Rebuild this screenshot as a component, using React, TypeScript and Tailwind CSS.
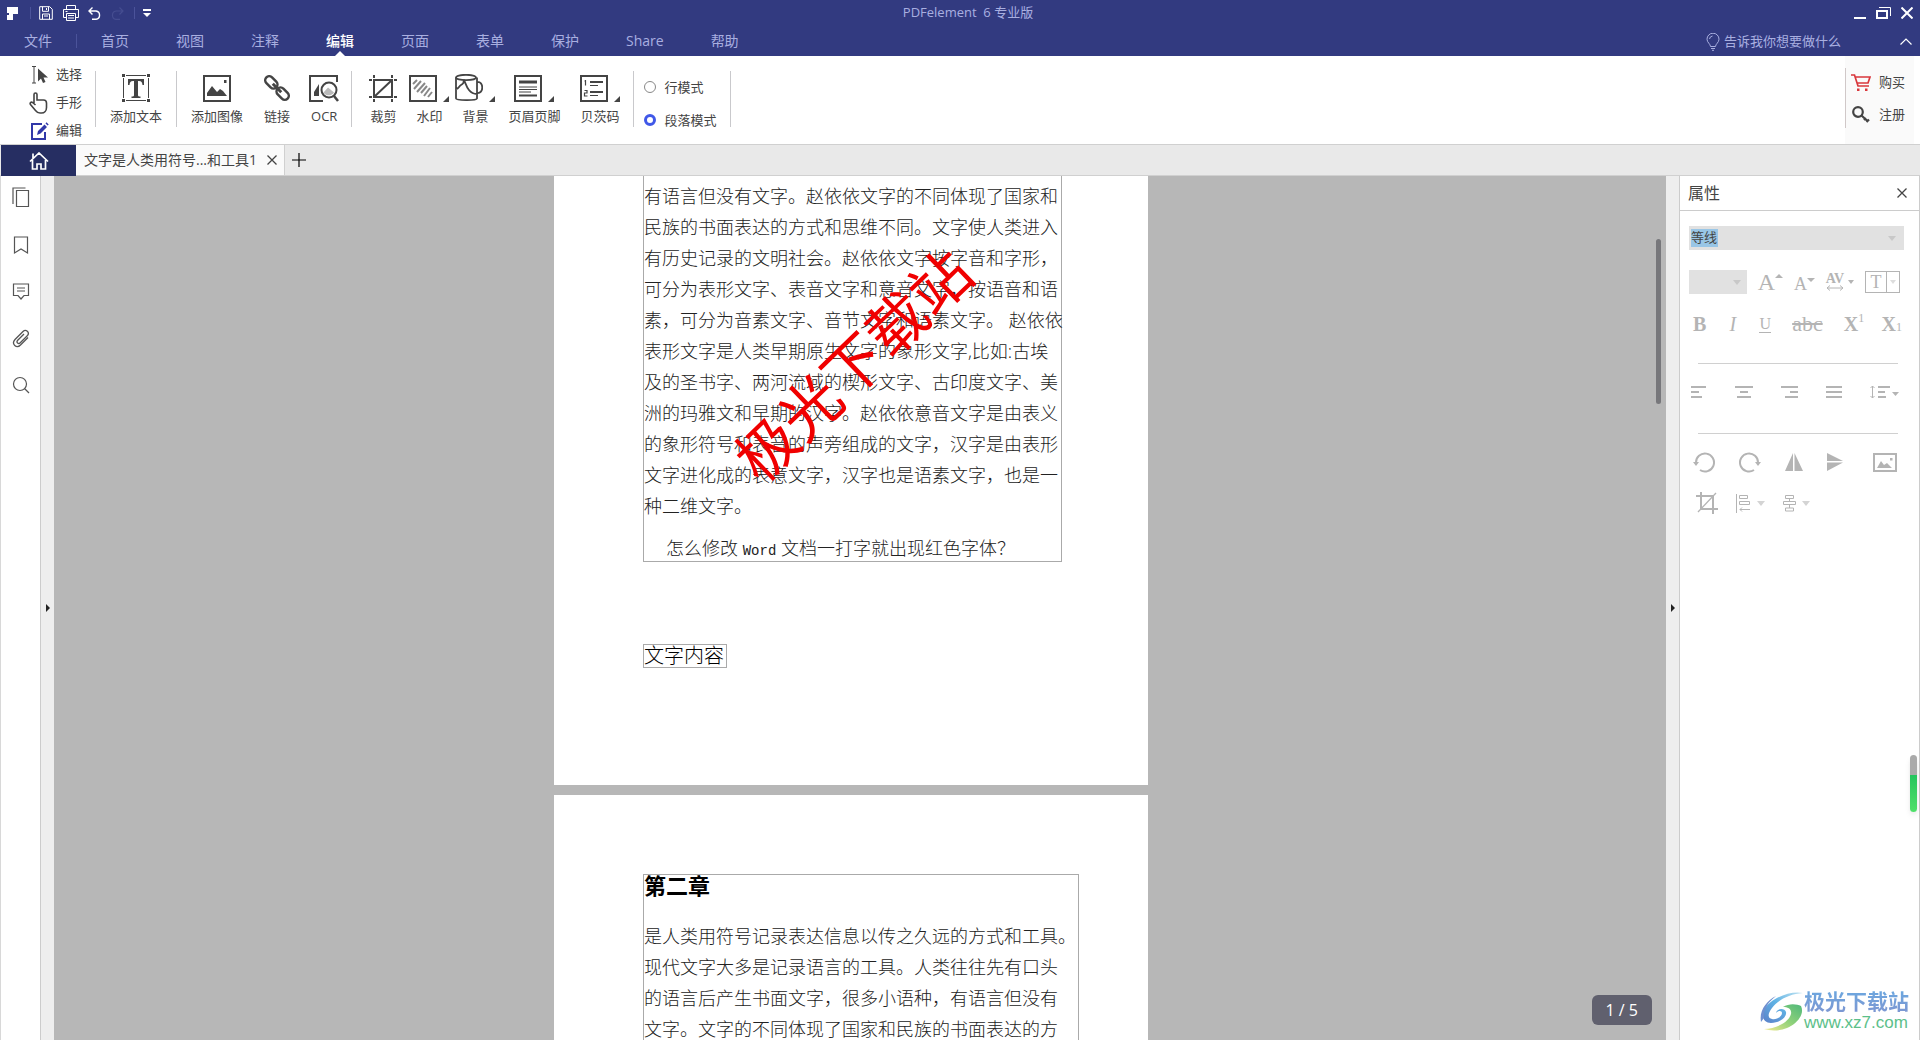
import { FC, ReactNode, useState } from 'react';

const MENU = ['首页', '视图', '注释', '编辑', '页面', '表单', '保护', 'Share', '帮助'];

const PAGE_ONE = [
  '有语言但没有文字。赵依依文字的不同体现了国家和',
  '民族的书面表达的方式和思维不同。文字使人类进入',
  '有历史记录的文明社会。赵依依文字按字音和字形，',
  '可分为表形文字、表音文字和意音文字，按语音和语',
  '素，可分为音素文字、音节文字和语素文字。 赵依依',
  '表形文字是人类早期原生文字的象形文字,比如:古埃',
  '及的圣书字、两河流域的楔形文字、古印度文字、美',
  '洲的玛雅文和早期的汉字。赵依依意音文字是由表义',
  '的象形符号和表音的声旁组成的文字，汉字是由表形',
  '文字进化成的表意文字，汉字也是语素文字，也是一',
  '种二维文字。',
];

const PAGE_TWO = [
  '是人类用符号记录表达信息以传之久远的方式和工具。',
  '现代文字大多是记录语言的工具。人类往往先有口头',
  '的语言后产生书面文字，很多小语种，有语言但没有',
  '文字。文字的不同体现了国家和民族的书面表达的方',
];

interface IconProps {
  w: number;
  h: number;
  sw?: number;
  children: ReactNode;
}

const Icon: FC<IconProps> = ({ w, h, sw = 1, children }) => (
  <svg
    width={w}
    height={h}
    viewBox={`0 0 ${w} ${h}`}
    fill="none"
    stroke="currentColor"
    strokeWidth={sw}
    className="shrink-0"
    aria-hidden
  >
    {children}
  </svg>
);

const Caret: FC = () => (
  <Icon w={8} h={5}>
    <path d="M0 0h8L4 5z" fill="currentColor" stroke="none" />
  </Icon>
);

const Cross: FC<{ size: number; sw?: number }> = ({ size, sw = 1.3 }) => (
  <Icon w={size} h={size} sw={sw}>
    <path d={`M.5.5 ${size - 0.5} ${size - 0.5}M${size - 0.5}.5.5 ${size - 0.5}`} />
  </Icon>
);

const Divider: FC = () => <div className="mx-[14px] h-14 w-px shrink-0 bg-[#c9c9cc]" />;

const Tool: FC<{ label: string; menu?: boolean; children: ReactNode }> = ({
  label,
  menu,
  children,
}) => (
  <button type="button" className="flex flex-col items-center gap-1 text-[#444]">
    <span className="-mx-2 flex h-[30px] items-end gap-[6px]">
      {children}
      {menu && (
        <Icon w={6} h={6}>
          <path d="M6 0v6H0z" fill="currentColor" stroke="none" />
        </Icon>
      )}
    </span>
    <span className="text-[13px] leading-5">{label}</span>
  </button>
);

const TitleBar: FC = () => (
  <div className="flex h-[26px] items-center justify-between px-[7px] text-white">
    <div className="flex flex-1 items-center">
      <Icon w={11} h={13}>
        <path d="M0 0h11v7H6v6H0V8h2V6H0z" fill="currentColor" stroke="none" />
      </Icon>
      <span className="ml-3 h-3 w-px bg-[#4b539a]" />
      <button type="button" aria-label="保存" className="ml-2">
        <Icon w={14} h={14}>
          <path d="M.7.7h10l2.6 2.6v10H.7zM3.5.7v4.6h6V.7M7.5 2v2M3.5 13.300V8h7v5.300M5 10h4" />
        </Icon>
      </button>
      <button type="button" aria-label="打印" className="ml-[10px]">
        <Icon w={16} h={16}>
          <path d="M3.500 4.500v-4h9v4M3.500 12.500h-3v-8h15v8h-3M3.500 8.500h9v7h-9zM5 10.500h6M5 13h6M2.500 6.500h2" />
        </Icon>
      </button>
      <button type="button" aria-label="撤销" className="ml-[9px]">
        <Icon w={13} h={13} sw={1.4}>
          <path d="M4.500 .5 1 4l3.500 3.500M1 4h7a4.200 4.200 0 0 1 0 8.300H4" />
        </Icon>
      </button>
      <button type="button" aria-label="重做" className="ml-[10px] text-[#454d90]">
        <Icon w={13} h={13} sw={1.2}>
          <path d="M8.500 .5 12 4 8.500 7.500M12 4H5a4.200 4.200 0 0 0 0 8.300h4" />
        </Icon>
      </button>
      <span className="ml-[10px] h-3 w-px bg-[#4b539a]" />
      <button type="button" aria-label="自定义" className="ml-2">
        <Icon w={8} h={8}>
          <path d="M0 0h8v2H0zM0 4h8L4 8z" fill="currentColor" stroke="none" />
        </Icon>
      </button>
    </div>
    <h1 className="pl-4 text-[13px] whitespace-pre text-[#a9afe0]">PDFelement  6 专业版</h1>
    <div className="flex flex-1 items-center justify-end gap-[10px]">
      <button type="button" aria-label="最小化">
        <Icon w={12} h={12} sw={2}>
          <path d="M0 11h12" />
        </Icon>
      </button>
      <button type="button" aria-label="还原">
        <Icon w={15} h={12}>
          <path d="M1 4h10v7H1z" strokeWidth="2" />
          <path d="M3 .5h11.500V9" />
        </Icon>
      </button>
      <button type="button" aria-label="关闭">
        <Cross size={12} sw={2} />
      </button>
    </div>
  </div>
);

const MenuBar: FC = () => (
  <nav className="flex h-[30px] items-stretch pr-2 pl-6 text-sm text-[#a9afe0]">
    <button type="button" className="pb-px">文件</button>
    <span className="mx-6 mt-2 h-[14px] w-px bg-[#4b539a]" />
    <div className="flex gap-[47px]">
      {MENU.map((item) => (
        <button
          type="button"
          key={item}
          className={item === '编辑' ? 'relative pb-px font-medium text-white' : 'pb-px'}
        >
          {item}
          {item === '编辑' && (
            <span className="absolute bottom-0 left-1/2 -translate-x-1/2">
              <Icon w={10} h={5}>
                <path d="M0 5 5 0l5 5z" fill="#fff" stroke="none" />
              </Icon>
            </span>
          )}
        </button>
      ))}
    </div>
    <div className="ml-auto flex items-center gap-[57px] pt-px">
      <label className="flex items-center gap-1">
        <Icon w={14} h={18}>
          <path d="M4.500 13.500C4.500 11 1 9.500 1 6.200a6 6 0 0 1 12 0c0 3.300-3.500 4.800-3.500 7.300zM5 15.500h4M6 17.300h2M3.500 6A3.500 3.500 0 0 1 6.500 3" />
        </Icon>
        <input
          aria-label="告诉我你想要做什么"
          placeholder="告诉我你想要做什么"
          className="w-[119px] bg-transparent text-[13px] outline-none placeholder:text-[#a9afe0]"
        />
      </label>
      <button type="button" aria-label="折叠" className="text-white">
        <Icon w={12} h={7} sw={1.2}>
          <path d="m.5 6.500 5.500-5.500 5.500 5.500" />
        </Icon>
      </button>
    </div>
  </nav>
);

const Ribbon: FC = () => {
  const [mode, setMode] = useState('段落模式');
  return (
    <div className="flex h-[89px] shrink-0 items-stretch justify-between border-b border-[#d0d0d0] bg-white text-[13px] text-[#444]">
      <div className="flex items-center pb-[3px] pl-[29px]">
        <div className="-mr-px flex h-full flex-col justify-center pt-[9px]">
          <button type="button" className="flex h-7 shrink-0 items-center gap-[7px]">
            <Icon w={20} h={18}>
              <path d="M3 .5h4M5 .5v16.500M3 17h4" />
              <path d="M9 2.500v13l3-3 2 4.500 2.500-1-2-4.500h4.500z" fill="currentColor" stroke="none" />
            </Icon>
            选择
          </button>
          <button type="button" className="flex h-7 shrink-0 items-center gap-[7px]">
            <Icon w={20} h={22} sw={1.6}>
              <path d="M5 11V2.500a1.500 1.500 0 0 1 3 0V8h6.500c2 0 3 1.200 3 3v4.500c0 3-2 5.500-5 5.500h-1.500c-2 0-3.200-.8-4.500-2.500L1.500 12.500C.5 11 2 9.500 3.500 10.500L6.500 13" />
            </Icon>
            手形
          </button>
          <button type="button" className="flex h-7 shrink-0 items-center gap-[7px]">
            <span className="text-[#3138a8]">
              <Icon w={20} h={18} sw={2}>
                <path d="M13 2H3v15h13v-7" />
                <path d="m8 13 1-4 6.500-6.500 2.500 2.500-6.500 6.500zM16.500 1.500l1-1.200 2.200 2.200-1 1.100z" fill="currentColor" stroke="none" />
              </Icon>
            </span>
            编辑
          </button>
        </div>
        <Divider />
        <Tool label="添加文本">
          <Icon w={28} h={28} sw={1.4}>
            <path d="M4 1.500h20M4 26.500h20M1.500 4v20M26.500 4v20" strokeWidth="1" />
            <path d="M0 0h3v3H0zM25 0h3v3h-3zM0 25h3v3H0zM25 25h3v3h-3z" fill="currentColor" stroke="none" />
            <path d="M6 5h16v6h-1.500c-.3-2.500-1-4-3.500-4h-1v14c0 1 .5 1.500 2.500 1.500V24h-9v-1.500c2 0 2.500-.5 2.500-1.500V7h-1c-2.500 0-3.200 1.500-3.500 4H6z" fill="currentColor" stroke="none" />
          </Icon>
        </Tool>
        <Divider />
        <div className="flex gap-[21px]">
          <Tool label="添加图像">
            <Icon w={28} h={27} sw={2}>
              <path d="M1 1h26v25H1z" />
              <path d="M4 21v-3l5-7 5 6 3-3 3 2 4 5zM21 5h2.500v3H21z" fill="currentColor" stroke="none" />
            </Icon>
          </Tool>
          <Tool label="链接">
            <Icon w={26} h={27} sw={2.5}>
              <g transform="rotate(45 13 13)">
                <rect x="-2" y="9" width="14" height="8" rx="4" />
                <rect x="14" y="9" width="14" height="8" rx="4" />
                <path d="M7 13h12" strokeWidth="3" />
              </g>
            </Icon>
          </Tool>
          <Tool label="OCR">
            <Icon w={30} h={27} sw={2}>
              <path d="M28 7V1H1v25h13" />
              <path d="M5 21V17l5-8v12z" fill="currentColor" stroke="none" />
              <circle cx="20" cy="15" r="7.500" fill="#fff" />
              <path d="M14.500 17.500 19 12.500l6 5c-2 3.500-8 4-10.500 0z" fill="#bbb" stroke="none" />
              <path d="m25 21 4 5" strokeWidth="2.500" />
            </Icon>
          </Tool>
        </div>
        <Divider />
        <div className="flex gap-5 pl-1">
          <Tool label="裁剪">
            <Icon w={28} h={27} sw={2}>
              <path d="M5 5h18v17H5zM5 22 23 5" />
              <path d="M0 5h3M25 5h3M0 22h3M25 22h3M5 0v3M23 0v3M5 24v3M23 24v3" />
            </Icon>
          </Tool>
          <Tool label="水印" menu>
            <Icon w={28} h={27} sw={2}>
              <path d="M1 1h26v25H1z" />
              <path d="m4 9 4-4M5 14l7-8M8 17l8-9M12 18l6-7M15 21l6-8M19 22l4-5" stroke="#888" />
            </Icon>
          </Tool>
          <Tool label="背景" menu>
            <Icon w={28} h={28} sw={1.8}>
              <ellipse cx="11" cy="3.500" rx="10" ry="2.700" />
              <path d="M1 3.500v21c0 2 20 2.500 21 0V3.500M22 8c7-1 7 12 0 11M1 15c3 0 3-3 5-4s3-3 3-5c2 4 4 14 13 14" />
            </Icon>
          </Tool>
          <Tool label="页眉页脚" menu>
            <Icon w={28} h={27} sw={2}>
              <path d="M1 1h26v25H1zM5 20.500h18" />
              <path d="M5 7h18" strokeWidth="3" />
              <path d="M5 12h18M5 14.500h18M5 17h12" strokeWidth="1" />
            </Icon>
          </Tool>
          <Tool label="贝茨码" menu>
            <Icon w={28} h={27} sw={2}>
              <path d="M1 1h26v25H1zM10 7h13M10 17h13" />
              <path d="M10 10.500h8M10 20.500h8M5.500 5v5.500M4.500 6h1M4.500 15.500h2.500v2.500H4.500v3H7.500" strokeWidth="1.200" />
            </Icon>
          </Tool>
        </div>
        <Divider />
        <div className="-ml-1 flex flex-col gap-[13px] pt-[9px]">
          {['行模式', '段落模式'].map((name) => (
            <label key={name} className="flex items-center gap-2 leading-5">
              <input
                type="radio"
                name="mode"
                checked={mode === name}
                onChange={() => setMode(name)}
                className="size-3 appearance-none rounded-full border border-[#888] bg-white checked:border-[3px] checked:border-[#4058e8]"
              />
              {name}
            </label>
          ))}
        </div>
        <Divider />
      </div>
      <div className="mr-[6px] flex items-center bg-[#fafafa] pb-1">
        <span className="h-[60px] w-px bg-[#d0c8c8]" />
        <div className="flex flex-col gap-3 pr-[9px] pl-[5px]">
          <button type="button" className="flex items-center gap-2 leading-5">
            <span className="text-[#d9373c]">
              <Icon w={20} h={17} sw={1.7}>
                <path d="M0 1h3.500l3.500 11h11M4.500 3h14.500l-2 6H6.500" />
                <path d="M6 14.500h2.500V17H6zM14 14.500h2.500V17H14z" fill="currentColor" stroke="none" />
              </Icon>
            </span>
            购买
          </button>
          <button type="button" className="flex items-center gap-2 leading-5">
            <Icon w={20} h={17} sw={2.2}>
              <circle cx="7" cy="6" r="4.800" />
              <path d="m10.500 9.500 6.500 6M13 14l2-2M15.500 16l2.500-2.500" />
            </Icon>
            注册
          </button>
        </div>
      </div>
    </div>
  );
};

const TabBar: FC = () => (
  <div className="flex h-[31px] shrink-0 items-stretch border-b border-[#d0d0d0] bg-[#e9e9e9] pl-px">
    <button
      type="button"
      aria-label="主页"
      className="-mb-px flex w-[75px] items-center justify-center bg-[#262e62] text-white"
    >
      <Icon w={20} h={18} sw={1.7}>
        <path d="m1 9.500 9-8.500 9 8.500M3.500 8v9h4.500v-5h4v5h4.500V8M4 6V1.500" />
      </Icon>
    </button>
    <div className="flex items-center gap-[10px] border-r border-[#d0d0d0] bg-[#fafafa] pr-[7px] pl-2 text-sm text-[#444]">
      文字是人类用符号...和工具1
      <button type="button" aria-label="关闭标签">
        <Cross size={10} />
      </button>
    </div>
    <button type="button" aria-label="新建标签" className="px-[7px] text-black">
      <Icon w={14} h={14} sw={1.2}>
        <path d="M7 0v14M0 7h14" />
      </Icon>
    </button>
  </div>
);

const SideBar: FC = () => (
  <aside className="ml-px flex w-10 flex-col items-center gap-[26px] border-r border-[#ccc] bg-white pt-[11px] text-[#555]">
    <button type="button" aria-label="缩略图">
      <Icon w={18} h={21} sw={1.2}>
        <path d="M4.500 3.500h12v16h-12zM1 17V1h12.500" />
      </Icon>
    </button>
    <button type="button" aria-label="书签">
      <Icon w={18} h={21} sw={1.2}>
        <path d="M2.500 3h13v16L9 15l-6.500 4z" />
      </Icon>
    </button>
    <button type="button" aria-label="批注">
      <Icon w={18} h={21} sw={1.2}>
        <path d="M1.500 3h15v11.500H12L9 18l-3-3.500H1.500zM5 7h8M5 10h8" />
      </Icon>
    </button>
    <button type="button" aria-label="附件">
      <Icon w={18} h={21} sw={1.3}>
        <path d="M16 9.500 8.500 17c-4 4-9.500-1-5.500-5.500L11 3.500c3-3 7 1 4.500 4L8 15c-1.500 1.500-4-.5-2.500-2.500L12 6" />
      </Icon>
    </button>
    <button type="button" aria-label="搜索">
      <Icon w={18} h={21} sw={1.2}>
        <circle cx="8" cy="9" r="6.500" />
        <path d="m12.500 13.500 4.500 4.500" />
      </Icon>
    </button>
  </aside>
);

const Gutter: FC = () => (
  <button
    type="button"
    aria-label="展开"
    className="flex w-[13px] shrink-0 items-center justify-center bg-[#eee] text-[#222]"
  >
    <Icon w={4} h={8}>
      <path d="m0 0 4 4-4 4z" fill="currentColor" stroke="none" />
    </Icon>
  </button>
);

const Lines: FC<{ lines: string[] }> = ({ lines }) => (
  <p className="text-lg leading-[31px] whitespace-nowrap">
    {lines.map((line) => (
      <span key={line} className="block">
        {line}
      </span>
    ))}
  </p>
);

const Document: FC = () => (
  <main className="relative flex flex-1 justify-center overflow-hidden bg-[#b7b7b7] pr-[18px] font-light text-[#222]">
    <div className="flex w-[594px] flex-col gap-[10px]">
      <section className="relative shrink-0 bg-white pb-[117px] pl-[89px]">
        <div className="w-[419px] border border-t-0 border-[#aaa] pt-[5px]">
          <Lines lines={PAGE_ONE} />
          <p className="pt-[13px] pl-[22px] text-lg leading-[26px]">
            怎么修改 <span className="font-['Liberation_Mono',monospace] text-sm">Word</span>{' '}
            文档一打字就出现红色字体？
          </p>
        </div>
        <p className="mt-[82px] w-fit border border-[#aaa] pr-[2px] text-xl leading-[22px] text-black">
          文字内容
        </p>
        <span className="absolute top-[189px] left-[299px] -translate-x-1/2 -translate-y-1/2 -rotate-44 text-[60px] leading-none font-normal whitespace-nowrap text-[#f00000]">
          极光下载站
        </span>
      </section>
      <section className="shrink-0 bg-white pt-[79px] pl-[89px]">
        <div className="w-[436px] border border-b-0 border-[#aaa] pb-20">
          <h2 className="mb-[26px] text-[22px] leading-5 font-bold text-black">第二章</h2>
          <Lines lines={PAGE_TWO} />
        </div>
      </section>
    </div>
    <div className="absolute top-[63px] right-[5px] h-[165px] w-[5px] rounded-sm bg-[#77777b]" />
    <div className="absolute right-[14px] bottom-[15px] rounded-md bg-[#60606e] px-[14px] text-base leading-[30px] font-normal text-white">
      1 / 5
    </div>
  </main>
);

const Format: FC<{ label: string; children: ReactNode }> = ({ label, children }) => (
  <button type="button" aria-label={label} className="flex items-center justify-center">
    {children}
  </button>
);

const Properties: FC = () => (
  <aside className="relative w-[241px] shrink-0 border-x border-[#ccc] bg-white text-[#b4b4b4]">
    <header className="flex h-[35px] items-center justify-between border-b border-[#ccc] pr-3 pl-2 text-[#444]">
      <h2 className="text-base">属性</h2>
      <button type="button" aria-label="关闭属性">
        <Cross size={10} />
      </button>
    </header>
    <div className="pt-[15px] pr-[15px] pl-[9px]">
      <div className="flex h-6 items-center justify-between bg-[#e1e1e1] pr-2 pl-[2px]">
        <input
          aria-label="字体"
          defaultValue="等线"
          className="h-[18px] w-[27px] bg-[#99c6e6] text-[13px] text-[#444] outline-none"
        />
        <button type="button" aria-label="字体列表" className="text-[#c8c8c8]">
          <Caret />
        </button>
      </div>
      <div className="mt-5 flex h-6 items-center justify-between pr-1 font-['Liberation_Serif',serif]">
        <div className="flex h-6 w-[58px] items-center bg-[#e1e1e1] pr-[6px] text-[#c8c8c8]">
          <select aria-label="字号" className="w-11 appearance-none bg-transparent" />
          <Caret />
        </div>
        <Format label="增大字号">
          <span className="text-2xl leading-6">A</span>
          <span className="mb-3">
            <Icon w={8} h={4}>
              <path d="M0 4h8L4 0z" fill="currentColor" stroke="none" />
            </Icon>
          </span>
        </Format>
        <Format label="减小字号">
          <span className="pt-1 text-lg leading-5">A</span>
          <span className="mb-1">
            <Icon w={8} h={4}>
              <path d="M0 0h8L4 4z" fill="currentColor" stroke="none" />
            </Icon>
          </span>
        </Format>
        <Format label="字符间距">
          <span className="mr-1 flex flex-col items-center text-sm leading-3 font-bold">
            AV
            <Icon w={18} h={6}>
              <path d="M1 3h16M4 .5 1 3l3 2.500M14 .5 17 3l-3 2.500" />
            </Icon>
          </span>
          <Icon w={6} h={4}>
            <path d="M0 0h6L3 4z" fill="currentColor" stroke="none" />
          </Icon>
        </Format>
        <Format label="文字颜色">
          <span className="w-[22px] border border-current text-lg leading-5">T</span>
          <span className="flex h-[22px] w-[13px] items-center justify-center border border-l-0 border-current">
            <Icon w={6} h={4}>
              <path d="M0 0h6L3 4z" fill="#ddd" stroke="none" />
            </Icon>
          </span>
        </Format>
      </div>
      <div className="mt-[18px] flex h-6 items-center justify-between pr-[2px] pl-1 font-['Liberation_Serif',serif] text-xl leading-6">
        <Format label="加粗">
          <b>B</b>
        </Format>
        <Format label="倾斜">
          <i className="px-[6px]">I</i>
        </Format>
        <Format label="下划线">
          <span className="border-b border-current text-base leading-4">U</span>
        </Format>
        <Format label="删除线">
          <span className="px-1 text-[22px] line-through">abc</span>
        </Format>
        <Format label="上标">
          <b>X</b>
          <sup className="text-xs">1</sup>
        </Format>
        <Format label="下标">
          <b>X</b>
          <sub className="text-xs">1</sub>
        </Format>
      </div>
      <hr className="mt-[27px] mr-[6px] ml-[9px] border-[#d0d0d0]" />
      <div className="mt-4 flex h-6 items-center justify-between pr-[5px] pl-[2px]">
        <Format label="左对齐">
          <Icon w={16} h={14} sw={2}>
            <path d="M0 2h15M0 7h8M0 12h11" />
          </Icon>
        </Format>
        <Format label="居中">
          <Icon w={18} h={14} sw={2}>
            <path d="M0 2h18M5 7h8M2 12h14" />
          </Icon>
        </Format>
        <Format label="右对齐">
          <Icon w={17} h={14} sw={2}>
            <path d="M0 2h17M9 7h8M4 12h13" />
          </Icon>
        </Format>
        <Format label="两端对齐">
          <Icon w={16} h={14} sw={2}>
            <path d="M0 2h16M0 7h16M0 12h16" />
          </Icon>
        </Format>
        <Format label="行距">
          <Icon w={29} h={14}>
            <path d="M2.500 1v12M.5 3l2-2 2 2M.5 11l2 2 2-2" />
            <path d="M8 2h12M8 7h7M8 12h8" strokeWidth="2" />
            <path d="M22 7h7l-3.500 4z" fill="currentColor" stroke="none" />
          </Icon>
        </Format>
      </div>
      <hr className="mt-[29px] mr-[6px] ml-[9px] border-[#d0d0d0]" />
      <div className="mt-4 flex h-6 items-center justify-between pr-[7px] pl-1">
        <Format label="向左旋转">
          <Icon w={22} h={22} sw={2}>
            <path d="M3 12a9 9 0 1 1 4 7" />
            <path d="M0 11h6l-3 4z" fill="currentColor" stroke="none" />
          </Icon>
        </Format>
        <Format label="向右旋转">
          <Icon w={22} h={22} sw={2}>
            <path d="M19 12a9 9 0 1 0-4 7" />
            <path d="M16 11h6l-3 4z" fill="currentColor" stroke="none" />
          </Icon>
        </Format>
        <Format label="水平翻转">
          <Icon w={18} h={18}>
            <path d="M8 0v18H0zM9.500 0v18H18z" fill="currentColor" stroke="none" />
          </Icon>
        </Format>
        <Format label="垂直翻转">
          <Icon w={22} h={18}>
            <path d="M0 8V0l16 8zM0 9.500V18l16-8.500z" fill="currentColor" stroke="none" />
          </Icon>
        </Format>
        <Format label="替换图像">
          <Icon w={24} h={19} sw={2}>
            <path d="M1 1h22v17H1z" />
            <path d="M4 15l4-7 3 4 3-2 5 5zM17 5h2.500v2.500H17z" fill="currentColor" stroke="none" />
          </Icon>
        </Format>
      </div>
      <div className="mt-[17px] flex h-6 items-center gap-[18px] pl-[7px]">
        <Format label="裁剪图像">
          <Icon w={22} h={22} sw={2}>
            <path d="M5 0v17h17M0 4h17v18" />
            <path d="M2 20 20 1" strokeWidth="1.300" />
          </Icon>
        </Format>
        <Format label="对齐">
          <Icon w={15} h={19}>
            <path d="M.5 0v19M3.500 1.500h8v3h-8zM3.500 7.500h10v3h-10zM4 15.500h10M6 13.500l-2 2 2 2" />
          </Icon>
          <span className="ml-[6px] text-[#d4d4d4]">
            <Caret />
          </span>
        </Format>
        <Format label="分布">
          <Icon w={13} h={17}>
            <path d="M2.500.5h8v3h-8zM.5 6.500h12v3H.5zM2.500 13h8v3h-8zM6.500 3.500v3M6.500 9.500v3.500" />
          </Icon>
          <span className="ml-[6px] text-[#d4d4d4]">
            <Caret />
          </span>
        </Format>
      </div>
    </div>
    <div className="absolute right-[2px] bottom-[228px] h-[57px] w-[7px] rounded-full bg-linear-to-b from-[#aaa] from-35% via-[#23c55e] via-35% to-[#4fe06a] shadow-md" />
    <div className="absolute right-[10px] bottom-[7px] flex items-center">
      <svg width="44" height="40" viewBox="0 0 44 40" aria-hidden>
        <defs>
          <linearGradient id="sky" x1="0" y1="1" x2="1" y2="0">
            <stop offset="0" stopColor="#5b7fc8" />
            <stop offset=".5" stopColor="#5fb2e4" />
            <stop offset="1" stopColor="#bfe3f2" />
          </linearGradient>
          <linearGradient id="leaf" x1="0" y1="1" x2="1" y2="0">
            <stop offset="0" stopColor="#f2ea90" />
            <stop offset=".5" stopColor="#8fd17a" />
            <stop offset="1" stopColor="#4fb87a" />
          </linearGradient>
        </defs>
        <path d="M43 2C30-1 9 8 4 19c-3 7 0 13 7 13 9 0 16-6 15-11-1-4-9-4-10 1 3-3 6-2 6 0 0 4-6 7-10 6-5-1-4-6 0-11C18 9 29 3 43 2z" fill="url(#sky)" />
        <path d="M23 16c6-4 14-3 18-1 4 8-4 18-14 22-8 3-16 3-23 1 12 0 25-7 27-15 1-5-3-7-8-7z" fill="url(#leaf)" />
        <path d="M1 31C-1 20 6 10 16 5 8 11 3 19 4 27z" fill="#6e8fd0" />
      </svg>
      <div className="flex flex-col">
        <span className="bg-linear-to-b from-[#6aa8e0] to-[#7d97d2] bg-clip-text text-[21px] leading-6 font-bold text-transparent">
          极光下载站
        </span>
        <a href="#" className="font-['Liberation_Sans',sans-serif] text-[17px] leading-5 text-[#5cc08a]">
          www.xz7.com
        </a>
      </div>
    </div>
  </aside>
);

const App: FC = () => (
  <div className="flex h-screen flex-col overflow-hidden bg-[#d8d8d8] font-['Open_Sans','Noto_Sans_CJK_SC',sans-serif]">
    <header className="shrink-0 bg-[#323a80]">
      <TitleBar />
      <MenuBar />
    </header>
    <Ribbon />
    <TabBar />
    <div className="flex min-h-0 flex-1">
      <SideBar />
      <Gutter />
      <Document />
      <Gutter />
      <Properties />
    </div>
  </div>
);

export default App;
